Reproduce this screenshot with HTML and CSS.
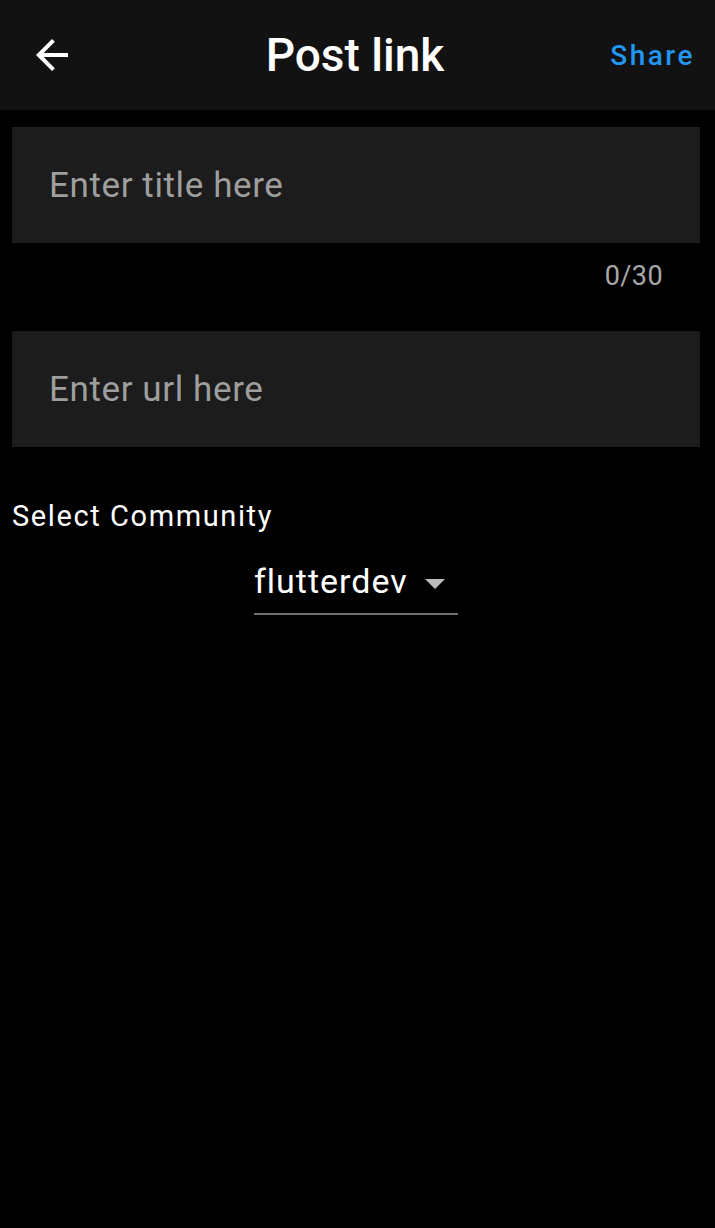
FILE: index.html
```html
<!DOCTYPE html>
<html>
<head>
<meta charset="utf-8">
<link rel="stylesheet" href="styles.css">
</head>
<body>
<div class="app">
  <header class="appbar">
    <button class="back" aria-label="Back">
      <svg width="48" height="48" viewBox="0 0 24 24"><path d="M20 11H7.83l5.59-5.59L12 4l-8 8 8 8 1.41-1.41L7.83 13H20v-2z" fill="#fff"/></svg>
    </button>
    <h1 class="title">Post link</h1>
    <span class="share">Share</span>
  </header>
  <main class="content">
    <div class="field"><span class="placeholder">Enter title here</span></div>
    <div class="counter">0/30</div>
    <div class="field url"><span class="placeholder">Enter url here</span></div>
    <div class="label">Select Community</div>
    <div class="dropdown-row">
      <div class="dropdown">
        <span class="value">flutterdev</span>
        <svg class="caret" width="20" height="10" viewBox="0 0 20 10"><path d="M0 0h20L10 10z" fill="#bdbdbd"/></svg>
      </div>
    </div>
  </main>
</div>
</body>
</html>
```
FILE: styles.css
```css
* { box-sizing: border-box; }
html, body { margin: 0; padding: 0; background: #000; }
body { font-family: Roboto, "Noto Sans", sans-serif; color: #fff; width: 715px; height: 1228px; overflow: hidden; }
.appbar {
  height: 110px;
  background: #121212;
  display: flex;
  align-items: center;
  position: relative;
  padding: 0 20px 0 28px;
}
.back { background: none; border: 0; padding: 0; display: flex; }
.title {
  position: absolute;
  left: 0; right: 0;
  padding-right: 5px;
  text-align: center;
  margin: 0;
  font-size: 46px;
  font-weight: 500;
  pointer-events: none;
}
.share { margin-left: auto; color: #2196f3; font-size: 28px; font-weight: 500; letter-spacing: 2.5px; }
.content { padding: 17px 15px 0 12px; }
.field {
  height: 116px;
  background: #1c1c1c;
  display: flex;
  align-items: center;
  padding: 0 37px;
}
.placeholder { color: #9e9e9e; font-size: 35px; letter-spacing: 0.6px; }
.counter {
  text-align: right;
  color: #a8a8a8;
  font-size: 27px;
  line-height: 32px;
  letter-spacing: 0.4px;
  padding: 17px 37px 0 0;
  height: 88px;
}
.label { margin-top: 49px; font-size: 29px; line-height: 40px; letter-spacing: 1.6px; }
.dropdown-row { display: flex; justify-content: center; margin-top: 25px; }
.dropdown {
  display: flex;
  align-items: center;
  width: 204px;
  border-bottom: 2px solid #6f6f6f;
  padding-bottom: 12px;
}
.value { font-size: 34px; line-height: 40px; letter-spacing: 1px; }
.caret { margin-left: 17px; margin-top: 5px; }
```
